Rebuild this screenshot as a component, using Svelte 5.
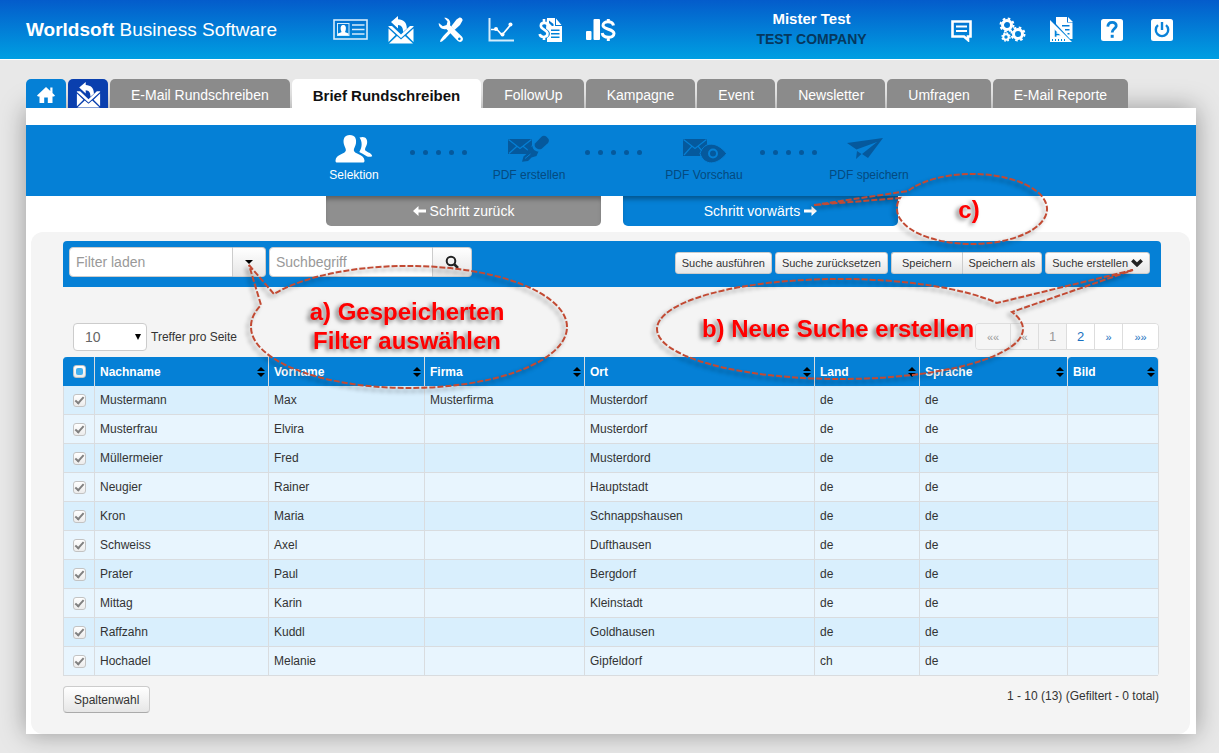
<script lang="ts">
    type Person = {
        last: string;
        first: string;
        company: string;
        city: string;
        country: string;
        lang: string;
        checked: boolean;
    };

    const tabs = [
        "E-Mail Rundschreiben",
        "Brief Rundschreiben",
        "FollowUp",
        "Kampagne",
        "Event",
        "Newsletter",
        "Umfragen",
        "E-Mail Reporte",
    ];

    const mainNav = [
        { icon: "contacts", label: "Kontakte" },
        { icon: "mailing", label: "Mailing" },
        { icon: "tools", label: "Werkzeuge" },
        { icon: "chart", label: "Statistik" },
        { icon: "invoice", label: "Rechnungen" },
        { icon: "sales", label: "Umsatz" },
    ];

    const userNav = [
        { icon: "message", label: "Nachrichten" },
        { icon: "gears", label: "Einstellungen" },
        { icon: "docs", label: "Dokumente" },
        { icon: "help", label: "Hilfe" },
        { icon: "power", label: "Abmelden" },
    ];

    const steps = [
        { icon: "people", label: "Selektion" },
        { icon: "write", label: "PDF erstellen" },
        { icon: "preview", label: "PDF Vorschau" },
        { icon: "plane", label: "PDF speichern" },
    ];

    const columns = ["Nachname", "Vorname", "Firma", "Ort", "Land", "Sprache", "Bild"];

    const names = [
        ["Mustermann", "Max", "Musterfirma", "Musterdorf", "de"],
        ["Musterfrau", "Elvira", "", "Musterdorf", "de"],
        ["Müllermeier", "Fred", "", "Musterdord", "de"],
        ["Neugier", "Rainer", "", "Hauptstadt", "de"],
        ["Kron", "Maria", "", "Schnappshausen", "de"],
        ["Schweiss", "Axel", "", "Dufthausen", "de"],
        ["Prater", "Paul", "", "Bergdorf", "de"],
        ["Mittag", "Karin", "", "Kleinstadt", "de"],
        ["Raffzahn", "Kuddl", "", "Goldhausen", "de"],
        ["Hochadel", "Melanie", "", "Gipfeldorf", "ch"],
    ];

    let activeTab = $state("Brief Rundschreiben");
    let activeStep = $state(0);
    let filter = $state("");
    let search = $state("");
    let pageSize = $state("10");
    let page = $state(1);

    let people: Person[] = $state(
        names.map(([last, first, company, city, country]) => ({
            last,
            first,
            company,
            city,
            country,
            lang: "de",
            checked: true,
        })),
    );

    function toggleAll() {
        const all = people.every((p) => p.checked);
        people.forEach((p) => (p.checked = !all));
    }
</script>

<svelte:head>
    <title>Worldsoft Business Software</title>
</svelte:head>

{#snippet icon(name: string)}
    {#if name === "contacts"}
        <svg width="36" height="22" viewBox="0 0 36 22">
            <rect x="1" y="1" width="33" height="19" fill="none" stroke="#d5ecfb" stroke-width="1.6" />
            <rect x="4.5" y="4.5" width="11.5" height="12" fill="none" stroke="#d5ecfb" />
            <path d="M5 16v-1.500l3.300-1.300c.4-.4 0-1-.3-1.800-1-3.500.2-5.400 2.300-5.400s3.300 1.900 2.300 5.400c-.3.800-.7 1.400-.3 1.800l3.300 1.300V16z" fill="#fff" />
            <path d="M19 6h12.500M19 10.500h12.500M19 15h12.500" stroke="#d5ecfb" stroke-width="1.500" />
        </svg>
    {:else if name === "mailing"}
        <svg width="26" height="28" viewBox="0 0 26 28">
            <path d="M.5 12.500l7 6.500-7 7zM25.500 12.500l-7 6.500 7 7zM1 27.500l8-7.500 4 3.500 4-3.500 8 7.500z" />
            <path d="M.5 10H4l9 8.500L22 10h3.500v.8L13 22 .5 10.800z" />
            <path d="M3 6l7-6v3.300c5.500.2 9 3.400 8.800 9.400L15 16c.3-4.200-1.500-6.800-5-7v3.500z" />
        </svg>
    {:else if name === "tools"}
        <svg width="26" height="26" viewBox="0 0 26 26">
            <path d="M18.500 2.400l3-1.900c1.400-.6 3.600 1.600 3 3L22 8l-5.500 5-3.400-3.400z" />
            <path d="M11.500 12.500l2.300 2.300-6.300 6.700L4 24.500l-2 .5.600-2.300 2.700-3.700z" />
            <path fill-rule="evenodd" d="M6.200.7C9.800.1 13.300 3.600 12 8.200l11.600 11c3.700 3.500-1 8-4.300 4.400L8.300 12C4 13.300.2 9.800.8 6l4 3.300 3.800-1.200.9-3.600zM21.300 20.600a1.300 1.300 0 1 0 .1 0z" />
        </svg>
    {:else if name === "chart"}
        <svg width="26" height="26" viewBox="0 0 26 26">
            <path d="M1.500 1v22.500H26" fill="none" stroke="#d5ecfb" stroke-width="2" />
            <path d="M3 12.500h6l5 5.500L22.500 8" fill="none" stroke="#fff" stroke-width="1.700" />
            <circle cx="8" cy="12" r="2" />
            <circle cx="14.500" cy="17.500" r="2" />
            <circle cx="22.500" cy="7.500" r="2" />
        </svg>
    {:else if name === "invoice"}
        <svg width="26" height="26" viewBox="0 0 26 26">
            <path fill-rule="evenodd" d="M9 1h8v8h7v16H9v-4c3-1.500 3.700-4.700 1.800-7L8 11.500zM18 1.500L23.500 8H18zM13 12.500v1.500h8.500v-1.500zM13 16v1.500h8.500V16zM13 19.500V21h8.500v-1.500zM11 3.500V6l3 3h1.500V7z" />
            <path d="M9.500 8C9 5.300 3 4.800 2.800 8.700c0 4.100 6.700 3.600 6.700 7.900 0 4.500-7.300 4.300-7.800.4M6 2v4M6 19v4" fill="none" stroke="#fff" stroke-width="2.600" />
        </svg>
    {:else if name === "sales"}
        <svg width="32" height="26" viewBox="0 0 32 26">
            <rect x="1" y="14" width="5.500" height="9" rx="1" />
            <rect x="8.500" y="2" width="6.500" height="21" rx="1" />
            <path d="M28.500 8.500c-1-5-10.500-4.800-10.500-.2 0 4.800 11 3 11 8.300 0 5.200-11 5-11.800-.6M23.300 2v4M23.300 19v5" fill="none" stroke="#fff" stroke-width="3" />
        </svg>
    {:else if name === "message"}
        <svg width="24" height="24" viewBox="0 0 24 24">
            <path d="M2.500 3.500h18v15h-2.500v3.500l-4-3.500H2.500z" fill="none" stroke="#fff" stroke-width="2.600" />
            <path d="M6 8.500h11M6 13h11" stroke="#fff" stroke-width="2" />
        </svg>
    {:else if name === "gears"}
        <svg width="28" height="26" viewBox="0 0 28 26">
            <g fill="none" stroke="#fff">
                <circle cx="9" cy="8" r="4.500" stroke-width="3" />
                <circle cx="9" cy="8" r="6.500" stroke-width="2" stroke-dasharray="2.600 2.500" />
                <circle cx="20" cy="17" r="4.500" stroke-width="3" />
                <circle cx="20" cy="17" r="6.500" stroke-width="2" stroke-dasharray="2.600 2.500" />
                <circle cx="8" cy="20" r="2.700" stroke-width="2" />
                <circle cx="8" cy="20" r="4" stroke-width="1.500" stroke-dasharray="1.700 1.450" />
            </g>
        </svg>
    {:else if name === "docs"}
        <svg width="26" height="28" viewBox="0 0 26 28">
            <path fill-rule="evenodd" d="M7 1h11v5.500h5.500V23H21L7 8zM19 1l5 5h-5zM13 9v1.500h7.500V9zM16 13v1.500h4.500V13zM18.500 17v1.500h2V17z" />
            <path fill-rule="evenodd" d="M1 4l22 22H1zM5 13v8.500h8.500zM3 23v2h1v-2zm3 0v2h1v-2zm3 0v2h1v-2zm3 0v2h1v-2zm3 0v2h1v-2z" />
            <path d="M5 13v8.500h8.500M7.500 17h4.500M7.500 20h7" fill="none" stroke="#fff" stroke-width="1.500" />
        </svg>
    {:else if name === "help"}
        <svg width="24" height="24" viewBox="0 0 24 24">
            <rect x="1" y="1" width="22" height="22" rx="2.500" />
            <path d="M7.800 8.700c.4-6.200 9-5.200 8.400-.6-.4 2.700-4 3-4 6.400" fill="none" stroke="#0a82d8" stroke-width="2.800" />
            <rect x="10.700" y="16.800" width="3" height="3" fill="#0a82d8" />
        </svg>
    {:else if name === "power"}
        <svg width="24" height="24" viewBox="0 0 24 24">
            <rect x="1" y="1" width="22" height="22" rx="2.500" />
            <path d="M8 7.200a6.200 6.200 0 1 0 8 0M12 4v8" fill="none" stroke="#0a82d8" stroke-width="2.400" />
        </svg>
    {:else if name === "home"}
        <svg width="20" height="18" viewBox="0 0 20 18">
            <path d="M10 1l4.300 4V1.500h2.200V7L19 9.500l-1 1h-1.500V17h-4.700v-5.500H8.200V17H3.500v-6.500H2l-1-1z" />
        </svg>
    {:else if name === "people"}
        <svg width="38" height="30" viewBox="0 0 38 30">
            <path d="M24.500 3.500c5.500-2 8.500 1.200 7.500 6.300-.4 2.300-1.900 4-2 5.600 0 2.600 7 2.800 7.200 6.800-2.500 1-5 .7-6.700-.7-2-1.700-4.800-2.400-6.200-3.500 3.200-5 3-10.500.2-14.500z" />
            <path d="M14.800 1c5.400 0 7 4 6.100 8.700-.5 2.700-2.100 4.500-2.100 6.500.2 4 10.500 4 10.700 10.300 0 1.200-.4 1.900-1 1.900H1.500c-.6 0-1-.7-1-1.900.2-6.300 10.100-6.300 10.400-10.300 0-2-1.600-3.800-2.100-6.500C7.900 5 9.500 1 14.800 1z" />
        </svg>
    {:else if name === "write"}
        <svg width="44" height="30" viewBox="0 0 44 30">
            <path d="M1 5h24v6l-4 9H1z" />
            <path d="M1.500 5.500L13 14.500l11.500-9M2 19.500l8-7.300M22 17l-6-4.800" fill="none" stroke="#0580d6" stroke-width="1.200" />
            <path d="M28 9.500l6.500-6.800c1.500-1.200 3.500-1 5 0l2 2.300c.8 1.500.3 3-.8 4.200l-6 5.500c-3 2-8.500-1.500-6.700-5.200z" />
            <path d="M25.500 12c0 3 2.500 5.500 6 5.500L29.500 22l-5 1.500-3.500 3.500-6 .7 1.500-5.200 3-2.500 1.500-5z" />
            <path d="M18 24.500l5.500-4.500" stroke="#0580d6" />
        </svg>
    {:else if name === "preview"}
        <svg width="44" height="30" viewBox="0 0 44 30">
            <path d="M1 5h24v7l-7 10H1z" />
            <path d="M1.500 5.500L13 14.500l11.500-9M2 21l8-8.800M20 17l-4-4.800" fill="none" stroke="#0580d6" stroke-width="1.200" />
            <path d="M18 19.500C22 7 35 7 44.500 19.500 35 32 22 32 18 19.500z" stroke="#0580d6" />
            <circle cx="31" cy="19.500" r="4" fill="none" stroke="#0580d6" stroke-width="2" />
        </svg>
    {:else if name === "plane"}
        <svg width="46" height="30" viewBox="0 0 46 30">
            <path d="M1 9l36-5-15 20-6-4L31 8 10.500 15.500zM11 17l4.500 3-5.500 5z" />
        </svg>
    {:else if name === "search"}
        <svg width="14" height="14" viewBox="0 0 14 14">
            <circle cx="6" cy="6" r="4.300" fill="none" stroke="#222" stroke-width="2" />
            <path d="M9 9l4 4" stroke="#222" stroke-width="2.500" />
        </svg>
    {:else if name === "left"}
        <svg width="13" height="10" viewBox="0 0 13 10">
            <path d="M0 5l5.500-5v3.400H13v3.200H5.500V10z" />
        </svg>
    {:else if name === "right"}
        <svg width="13" height="10" viewBox="0 0 13 10">
            <path d="M13 5L7.500 0v3.400H0v3.200h7.500V10z" />
        </svg>
    {:else if name === "chevron"}
        <svg width="12" height="8" viewBox="0 0 12 8">
            <path d="M1.300 1.300L6 5.800l4.700-4.500" fill="none" stroke="#222" stroke-width="3.500" />
        </svg>
    {/if}
{/snippet}

<div class="page">
    <header class="topbar">
        <div class="brand"><strong>Worldsoft</strong> Business Software</div>
        <nav class="icon-nav" aria-label="Module">
            {#each mainNav as item}
                <a href="#{item.icon}" aria-label={item.label}>{@render icon(item.icon)}</a>
            {/each}
        </nav>
        <div class="account">
            <div class="user">Mister Test</div>
            <div class="company">TEST COMPANY</div>
        </div>
        <nav class="icon-nav" aria-label="Benutzer">
            {#each userNav as item}
                <a href="#{item.icon}" aria-label={item.label}>{@render icon(item.icon)}</a>
            {/each}
        </nav>
    </header>

    <main>
        <nav class="tabs" aria-label="Bereiche">
            <a class="tab home" href="#home" aria-label="Start">{@render icon("home")}</a>
            <a class="tab mail" href="#mailing" aria-label="Mailing">{@render icon("mailing")}</a>
            {#each tabs as tab}
                <button
                    type="button"
                    class="tab"
                    class:active={tab === activeTab}
                    onclick={() => (activeTab = tab)}>{tab}</button
                >
            {/each}
        </nav>

        <section class="panel">
            <div class="wizard">
                <ol class="steps">
                    {#each steps as step, i}
                        {#if i > 0}
                            <li class="dots" aria-hidden="true">
                                <i></i><i></i><i></i><i></i><i></i>
                            </li>
                        {/if}
                        <li class="step" class:current={i === activeStep}>
                            {@render icon(step.icon)}
                            <span>{step.label}</span>
                        </li>
                    {/each}
                </ol>
            </div>

            <div class="step-buttons">
                <button
                    type="button"
                    class="back"
                    onclick={() => (activeStep = Math.max(0, activeStep - 1))}
                >
                    {@render icon("left")} Schritt zurück
                </button>
                <button
                    type="button"
                    class="next"
                    onclick={() => (activeStep = Math.min(3, activeStep + 1))}
                >
                    Schritt vorwärts {@render icon("right")}
                </button>
            </div>

            <div class="content">
                <div class="toolbar">
                    <div class="field">
                        <input type="text" aria-label="Filter laden" placeholder="Filter laden" bind:value={filter} />
                        <button type="button" class="drop" aria-label="Filter öffnen"><i class="caret"></i></button>
                    </div>
                    <div class="field">
                        <input type="text" aria-label="Suchbegriff" placeholder="Suchbegriff" bind:value={search} />
                        <button type="button" class="find" aria-label="Suchen">{@render icon("search")}</button>
                    </div>
                    <div class="actions">
                        <button type="button">Suche ausführen</button>
                        <button type="button">Suche zurücksetzen</button>
                        <div class="group">
                            <button type="button" class="save">Speichern</button>
                            <button type="button">Speichern als</button>
                        </div>
                        <button type="button">Suche erstellen {@render icon("chevron")}</button>
                    </div>
                </div>

                <div class="list-head">
                    <label>
                        <span class="select">
                            <select bind:value={pageSize}>
                                <option>10</option>
                                <option>25</option>
                                <option>50</option>
                            </select>
                            <i class="caret tall"></i>
                        </span>
                        Treffer pro Seite
                    </label>
                    <nav class="pages" aria-label="Seiten">
                        <button type="button" class="wide" disabled={page === 1} onclick={() => (page = 1)}>««</button>
                        <button type="button" disabled={page === 1} onclick={() => (page = 1)}>«</button>
                        <button type="button" class="number" disabled={page === 1} onclick={() => (page = 1)}>1</button>
                        <button type="button" class="number" disabled={page === 2} onclick={() => (page = 2)}>2</button>
                        <button type="button" disabled={page === 2} onclick={() => (page = 2)}>»</button>
                        <button type="button" class="wide" disabled={page === 2} onclick={() => (page = 2)}>»»</button>
                    </nav>
                </div>

                <table>
                    <colgroup>
                        <col class="c-check" />
                        <col class="c-last" />
                        <col class="c-first" />
                        <col class="c-company" />
                        <col />
                        <col class="c-country" />
                        <col class="c-lang" />
                        <col class="c-image" />
                    </colgroup>
                    <thead>
                        <tr>
                            <th class="check">
                                <input type="checkbox" class="all" aria-label="Alle auswählen" onchange={toggleAll} />
                            </th>
                            {#each columns as column}
                                <th>
                                    <div class="sort">
                                        {column}
                                        <svg width="8" height="10" viewBox="0 0 8 10" aria-hidden="true">
                                            <path d="M0 4l4-4 4 4zM0 6l4 4 4-4z" />
                                        </svg>
                                    </div>
                                </th>
                            {/each}
                        </tr>
                    </thead>
                    <tbody>
                        {#each people as person}
                            <tr>
                                <td class="check">
                                    <input type="checkbox" aria-label="{person.first} {person.last}" bind:checked={person.checked} />
                                </td>
                                <td>{person.last}</td>
                                <td>{person.first}</td>
                                <td>{person.company}</td>
                                <td>{person.city}</td>
                                <td>{person.country}</td>
                                <td>{person.lang}</td>
                                <td></td>
                            </tr>
                        {/each}
                    </tbody>
                </table>

                <div class="list-foot">
                    <button type="button">Spaltenwahl</button>
                    <span>1 - 10 (13) (Gefiltert - 0 total)</span>
                </div>
            </div>
        </section>
    </main>

    <!-- help callouts drawn over the page -->
    <svg class="callouts" width="1219" height="753" viewBox="0 0 1219 753">
        <g class="outline">
            <path d="M249 265L274 294A158 61 0 0 1 409 266A158 61 0 0 1 567 327A158 61 0 0 1 409 388A158 61 0 0 1 251 327A158 61 0 0 1 261 305Z" />
            <path d="M1133 270L997 303A183 50 0 0 0 840 279A183 50 0 0 0 657 329A183 50 0 0 0 840 379A183 50 0 0 0 1023 329A183 50 0 0 0 1012 312Z" />
            <path d="M814 205L908 191A75 35 0 0 1 972 174A75 35 0 0 1 1047 209A75 35 0 0 1 972 244A75 35 0 0 1 897 209A75 35 0 0 1 900 198Z" />
        </g>
        <g class="hint">
            <text x="407" y="320">a) Gespeicherten</text>
            <text x="407" y="349">Filter auswählen</text>
            <text x="838" y="337">b) Neue Suche erstellen</text>
            <text x="969" y="218">c)</text>
        </g>
    </svg>
</div>

<style>
    :global(body) {
        margin: 0;
        background: #e8e8e8;
    }

    .page {
        position: relative;
        min-height: 100vh;
        overflow: hidden;
        font-family: "Liberation Sans", Arial, sans-serif;
        font-size: 12px;
        color: #333;
    }

    .page :global(*) {
        box-sizing: border-box;
    }

    button,
    input,
    select {
        font: inherit;
        color: inherit;
        margin: 0;
    }

    button {
        cursor: pointer;
    }

    a {
        text-decoration: none;
    }

    svg {
        flex: none;
        fill: currentColor;
    }

    .topbar {
        display: grid;
        grid-template-columns: 300px 300px 1fr 250px;
        align-items: center;
        height: 60px;
        padding: 0 32px 0 26px;
        border-bottom: 1px solid #fff;
        background: linear-gradient(#045ccb, #009fe2);
        color: #fff;
    }

    .brand {
        font-size: 19px;
    }

    .icon-nav {
        display: flex;
        height: 56px;
    }

    .icon-nav a {
        flex: 1;
        display: flex;
        align-items: center;
        justify-content: center;
        color: #fff;
    }

    .account {
        padding: 0 0 2px 60px;
        font-size: 14px;
        font-weight: bold;
        line-height: 20px;
        text-align: center;
    }

    .user {
        font-size: 15px;
    }

    .company {
        color: #06385e;
    }

    main {
        padding: 19px 23px 19px 26px;
    }

    .tabs {
        display: flex;
        align-items: flex-start;
        gap: 2px;
    }

    .tab {
        height: 29px;
        padding: 3px 21px 0;
        border: 0;
        border-radius: 5px 5px 0 0;
        background: #8b8b8b;
        color: #fff;
        font-size: 14px;
        white-space: nowrap;
    }

    .tab.active {
        background: #fff;
        color: #111;
        font-size: 15px;
        font-weight: bold;
    }

    .tab.home,
    .tab.mail {
        display: flex;
        align-items: center;
        justify-content: center;
        width: 40px;
        padding: 3px 0 0;
        background: #0580d6;
    }

    .tab.mail {
        background: #0a3fae;
    }

    .tab.mail svg {
        width: 25px;
        height: 26px;
    }

    .panel {
        padding: 17px 0 0;
        background: #fff;
        box-shadow: 0 0 24px rgba(0, 0, 0, 0.35);
    }

    .wizard {
        height: 71px;
        padding: 9px 0 0 2px;
        background: #0580d6;
    }

    .steps {
        display: grid;
        grid-template-columns: 56px 112px 70px 98px 84px 84px 78px;
        width: 572px;
        margin: 0 auto;
        padding: 0;
        list-style: none;
    }

    .step {
        display: flex;
        flex-direction: column;
        align-items: center;
        color: #044a80;
        white-space: nowrap;
    }

    .step svg {
        color: #05599d;
    }

    .step span {
        margin-top: 3px;
        line-height: 16px;
    }

    .step.current,
    .step.current svg {
        color: #fff;
    }

    .dots {
        display: flex;
        justify-content: center;
        gap: 8px;
        padding-top: 16px;
    }

    .dots i {
        width: 5px;
        height: 5px;
        border-radius: 50%;
        background: #05599d;
    }

    .step-buttons {
        display: flex;
        justify-content: center;
        gap: 22px;
        padding-left: 2px;
    }

    .step-buttons button {
        display: flex;
        align-items: center;
        justify-content: center;
        gap: 4px;
        width: 275px;
        height: 30px;
        border: 0;
        border-radius: 0 0 5px 5px;
        box-shadow: inset 0 5px 5px -2px rgba(0, 0, 0, 0.35);
        color: #fff;
        font-size: 14px;
    }

    .back {
        background: #8f8f8f;
    }

    .next {
        background: #0580d6;
    }

    .content {
        margin: 6px 6px 0 5px;
        padding: 9px 29px 21px 32px;
        border-radius: 12px;
        background: #f4f4f4;
    }

    .toolbar {
        display: flex;
        align-items: flex-start;
        gap: 3px;
        height: 46px;
        padding: 6px 11px 0 6px;
        border-radius: 4px 4px 0 0;
        background: #0580d6;
    }

    .field {
        display: flex;
        height: 30px;
    }

    .field input {
        width: 164px;
        padding: 0 6px;
        border: 1px solid #ccc;
        border-radius: 4px 0 0 4px;
        background: #fff;
        font-size: 14px;
    }

    .field input::placeholder {
        color: #999;
    }

    .field button {
        display: flex;
        align-items: center;
        justify-content: center;
        width: 33px;
        padding: 0;
        border: 1px solid #ccc;
        border-left: 0;
        border-radius: 0 4px 4px 0;
        background: linear-gradient(#fff, #e6e6e6);
    }

    .field .find {
        width: 39px;
    }

    .caret {
        border: 4px solid transparent;
        border-top-color: #000;
        border-bottom: 0;
    }

    .actions {
        display: flex;
        gap: 3px;
        margin-left: auto;
        padding-top: 5px;
    }

    .group {
        display: flex;
    }

    .actions button {
        display: flex;
        align-items: center;
        gap: 3px;
        height: 22px;
        padding: 0 6px;
        border: 1px solid #ccc;
        border-radius: 3px;
        background: linear-gradient(#fff, #e6e6e6);
        font-size: 11px;
        white-space: nowrap;
    }

    .group button {
        border-radius: 0 3px 3px 0;
    }

    .group .save {
        padding: 0 10px;
        border-right: 0;
        border-radius: 3px 0 0 3px;
    }

    .list-head {
        display: flex;
        justify-content: space-between;
        height: 70px;
        padding: 36px 2px 0 10px;
    }

    .list-head label {
        display: flex;
        align-items: center;
        gap: 4px;
        height: 28px;
    }

    .select {
        display: flex;
        align-items: center;
        position: relative;
    }

    select {
        appearance: none;
        width: 74px;
        height: 28px;
        padding: 0 11px;
        border: 1px solid #ccc;
        border-radius: 4px;
        background: #fff;
        font-size: 14px;
        color: #666;
    }

    .caret.tall {
        position: absolute;
        right: 6px;
        border-width: 6px 3px 0;
        pointer-events: none;
    }

    .pages {
        display: flex;
        height: 27px;
        border: 1px solid #ddd;
        border-radius: 4px;
        overflow: hidden;
    }

    .pages button {
        width: 28px;
        padding: 0;
        border: 0;
        border-right: 1px solid #ddd;
        background: #fff;
        color: #1a70c0;
        font-size: 11px;
    }

    .pages .wide {
        width: 35px;
    }

    .pages .number {
        font-size: 13px;
    }

    .pages button:last-child {
        border-right: 0;
    }

    .pages button:disabled {
        background: #f5f5f5;
        color: #999;
    }

    table {
        width: calc(100% - 2px);
        table-layout: fixed;
        border-collapse: separate;
        border-spacing: 0;
        border: 1px solid #d9dcdf;
        border-width: 0 1px 0 0;
        border-radius: 4px;
    }

    .c-check {
        width: 31px;
    }

    .c-last {
        width: 174px;
    }

    .c-first {
        width: 156px;
    }

    .c-company {
        width: 160px;
    }

    .c-country {
        width: 105px;
    }

    .c-lang {
        width: 148px;
    }

    .c-image {
        width: 91px;
    }

    th,
    td {
        padding: 0 5px;
        border-left: 1px solid #d9dcdf;
        text-align: left;
    }

    th {
        height: 29px;
        padding-right: 3px;
        background: #0580d6;
        color: #fff;
    }

    th:first-child {
        border-left-color: #0580d6;
        border-top-left-radius: 4px;
    }

    th:last-child {
        border-radius: 4px 4px 0 0;
    }

    .sort {
        display: flex;
        align-items: center;
        justify-content: space-between;
    }

    .sort svg {
        color: #000;
    }

    td {
        height: 29px;
        border-bottom: 1px solid #d9dcdf;
        background: #e8f5fe;
    }

    tbody tr:nth-child(odd) td {
        background: #d9effd;
    }

    .check {
        padding: 0;
        text-align: center;
    }

    input[type="checkbox"] {
        appearance: none;
        display: block;
        position: relative;
        width: 13px;
        height: 13px;
        margin: 0 auto;
        border: 1px solid #c3c3c3;
        border-radius: 3px;
        background: linear-gradient(#fff, #ececec);
    }

    input[type="checkbox"]:checked::after {
        content: "";
        box-sizing: border-box;
        position: absolute;
        left: 3px;
        top: 0;
        width: 5px;
        height: 9px;
        border: solid #808080;
        border-width: 0 2px 2px 0;
        transform: rotate(42deg);
    }

    .all::after {
        content: "";
        position: absolute;
        inset: 2px;
        border-radius: 2px;
        background: #45b0ee;
    }

    .list-foot {
        display: flex;
        justify-content: space-between;
        padding: 10px 2px 0 0;
    }

    .list-foot button {
        height: 27px;
        padding: 0 10px;
        border: 1px solid #ccc;
        border-bottom-color: #aaa;
        border-radius: 4px;
        background: linear-gradient(#fff, #e6e6e6);
    }

    .list-foot span {
        line-height: 20px;
    }

    .callouts {
        position: absolute;
        top: 0;
        left: 0;
        pointer-events: none;
    }

    .outline {
        fill: none;
        stroke: #c24a33;
        stroke-width: 2;
        stroke-dasharray: 6 2;
        filter: drop-shadow(-3px 3px 2px rgba(0, 0, 0, 0.4));
    }

    .hint {
        fill: #f00;
        font-size: 24px;
        font-weight: bold;
        text-anchor: middle;
        filter: drop-shadow(-3px 2px 2px rgba(0, 0, 0, 0.5));
    }
</style>
